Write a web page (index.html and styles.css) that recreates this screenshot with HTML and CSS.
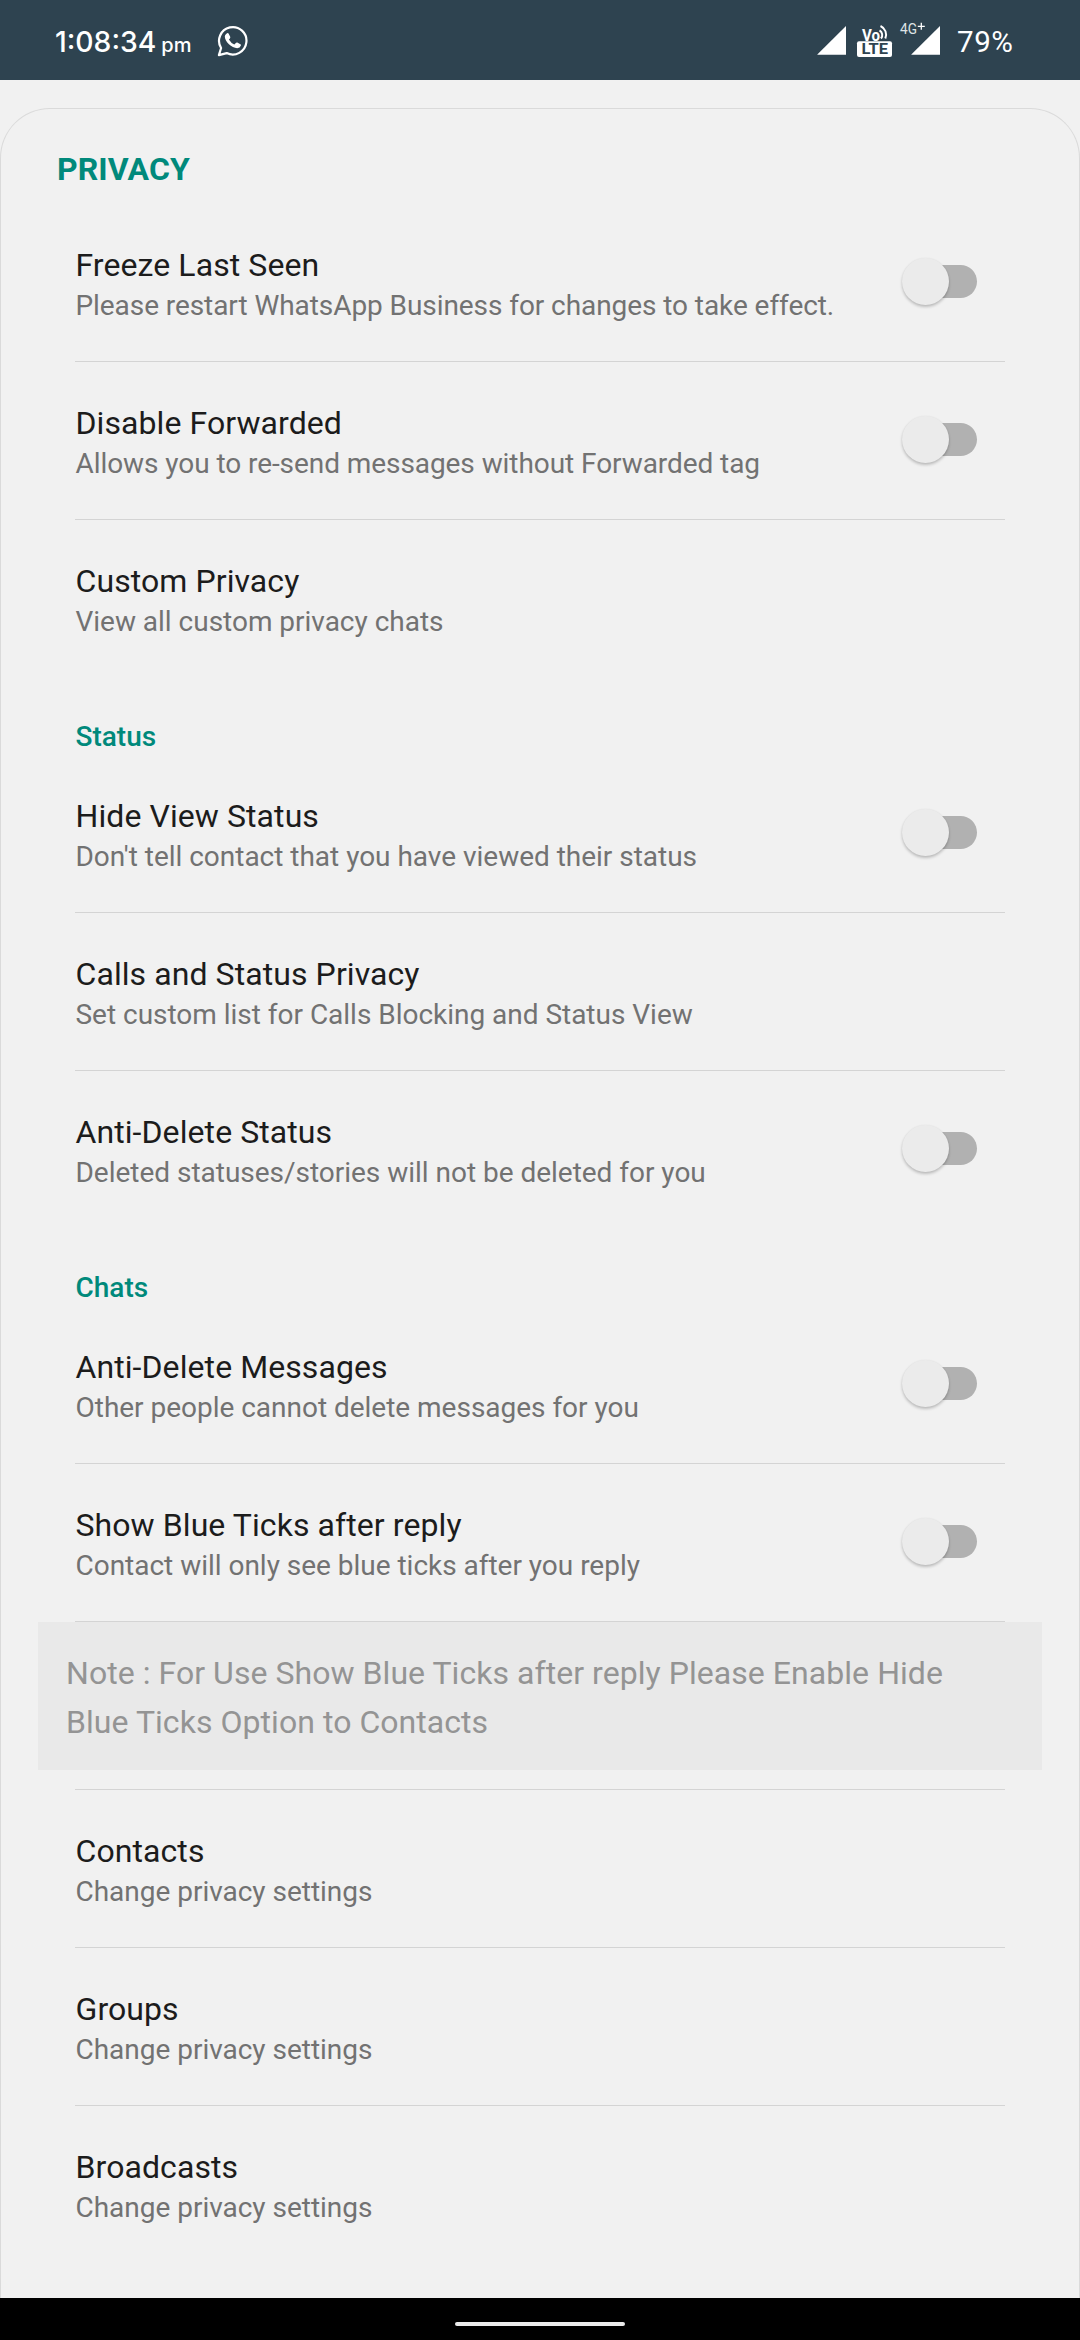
FILE: index.html
```html
<!DOCTYPE html>
<html lang="en">
<head>
<meta charset="utf-8">
<title>Privacy</title>
<link rel="stylesheet" href="styles.css">
</head>
<body>
<header class="status-bar">
  <div class="clock"><span class="clock-time">1:08:34</span><span class="clock-period">pm</span></div>
  <svg class="chat-icon" viewBox="0 0 32 32" aria-hidden="true">
    <path d="M1.9 30.1 4.1 23A13.7 13.7 0 1 1 9.7 28.1Z" fill="none" stroke="currentColor" stroke-width="2.2" stroke-linejoin="round"/>
    <path d="M9.4 8.7q1.5-1.3 2.3 0l1.5 3q.4.9-.3 1.7l-1 1.2q2 3.5 5.4 5l1.6-1.7q.6-.7 1.4-.3l3.1 1.6q.8.5.5 1.4-.8 2.5-3.7 2.7c-5.5-.5-12.3-6.5-12.4-11.8q.1-1.8 1.6-2.8Z" fill="currentColor"/>
  </svg>
  <svg class="signal-icons" viewBox="0 0 130 40" aria-hidden="true">
    <path d="M3.3 34.8V34.5L32 6V34.8Z" fill="currentColor"/>
    <text class="vo" x="48" y="20.5" textLength="18" lengthAdjust="spacingAndGlyphs">Vo</text>
    <path d="M65.5 10.3a5.5 5.5 0 0 1 1.5 8.2M66.5 6a9.5 9.5 0 0 1 4.800 12.5" fill="none" stroke="currentColor" stroke-width="2"/>
    <rect x="43" y="21.3" width="35" height="15.7" rx="2" fill="currentColor"/>
    <text class="lte" x="47.5" y="34.3" textLength="26.5" lengthAdjust="spacingAndGlyphs">LTE</text>
    <text class="gen" x="86" y="14.2" textLength="17" lengthAdjust="spacingAndGlyphs">4G</text>
    <path d="M103.8 6.3h7M107.3 2.8v7" stroke="currentColor" stroke-width="1.3"/>
    <path d="M97.3 34.8V34.5L126 6V34.8Z" fill="currentColor"/>
  </svg>
  <span class="battery">79%</span>
</header>

<main class="sheet">
  <h1 class="sheet-title">PRIVACY</h1>

  <section class="group">
    <div class="row">
      <div class="row-text"><div class="row-title">Freeze Last Seen</div><div class="row-summary tight">Please restart WhatsApp Business for changes to take effect.</div></div>
      <span class="toggle"></span>
    </div>
    <div class="row">
      <div class="row-text"><div class="row-title">Disable Forwarded</div><div class="row-summary tight">Allows you to re-send messages without Forwarded tag</div></div>
      <span class="toggle"></span>
    </div>
    <div class="row last">
      <div class="row-text"><div class="row-title">Custom Privacy</div><div class="row-summary">View all custom privacy chats</div></div>
    </div>
  </section>

  <section class="group">
    <h2 class="group-title">Status</h2>
    <div class="row">
      <div class="row-text"><div class="row-title">Hide View Status</div><div class="row-summary">Don't tell contact that you have viewed their status</div></div>
      <span class="toggle"></span>
    </div>
    <div class="row">
      <div class="row-text"><div class="row-title">Calls and Status Privacy</div><div class="row-summary">Set custom list for Calls Blocking and Status View</div></div>
    </div>
    <div class="row last">
      <div class="row-text"><div class="row-title">Anti-Delete Status</div><div class="row-summary">Deleted statuses/stories will not be deleted for you</div></div>
      <span class="toggle"></span>
    </div>
  </section>

  <section class="group">
    <h2 class="group-title">Chats</h2>
    <div class="row">
      <div class="row-text"><div class="row-title">Anti-Delete Messages</div><div class="row-summary">Other people cannot delete messages for you</div></div>
      <span class="toggle"></span>
    </div>
    <div class="row">
      <div class="row-text"><div class="row-title">Show Blue Ticks after reply</div><div class="row-summary">Contact will only see blue ticks after you reply</div></div>
      <span class="toggle"></span>
    </div>
  </section>

  <p class="note">Note : For Use Show Blue Ticks after reply Please Enable Hide<br>Blue Ticks Option to Contacts</p>

  <section class="group links">
    <div class="row">
      <div class="row-text"><div class="row-title">Contacts</div><div class="row-summary">Change privacy settings</div></div>
    </div>
    <div class="row">
      <div class="row-text"><div class="row-title">Groups</div><div class="row-summary">Change privacy settings</div></div>
    </div>
    <div class="row last">
      <div class="row-text"><div class="row-title">Broadcasts</div><div class="row-summary">Change privacy settings</div></div>
    </div>
  </section>
</main>

<footer class="nav-bar"><span class="nav-pill"></span></footer>
</body>
</html>
```
FILE: styles.css
```css
body {
  display: flex;
  flex-direction: column;
  width: 1080px;
  height: 2340px;
  margin: 0;
  overflow: hidden;
  background: #f1f1f1;
  font-family: Roboto, sans-serif;
}

/* Status bar */
.status-bar {
  display: flex;
  flex: none;
  align-items: flex-start;
  box-sizing: border-box;
  height: 80px;
  padding: 0 66px 0 55px;
  color: #fff;
  background: #2e4350;
}
.clock {
  display: flex;
  align-items: baseline;
  gap: 5px;
  padding-top: 25px;
  font-family: Inter, sans-serif;
  font-weight: 500;
  line-height: 34px;
}
.clock-time { font-size: 28.3px; }
.clock-period { font-size: 20px; }
.chat-icon { width: 32px; height: 32px; margin: 25px 0 0 26px; }
.signal-icons { width: 130px; height: 40px; margin: 20px 13px 0 auto; }
.vo { font: 700 17px Roboto, sans-serif; fill: #fff; }
.lte { font: 700 14.5px Roboto, sans-serif; fill: #2e4350; }
.gen { font: 400 14.5px Roboto, sans-serif; fill: #dfe3e5; }
.battery {
  width: 57px;
  padding-top: 25px;
  font-size: 29.5px;
  font-weight: 450;
  letter-spacing: .6px;
  line-height: 34px;
}

/* Settings sheet */
.sheet {
  flex: 1;
  margin-top: 28px;
  border: 1px solid #dadada;
  border-bottom: 0;
  border-radius: 50px 50px 0 0;
}
.sheet-title {
  margin: 0;
  padding: 41px 56px 16px;
  color: #00897b;
  font-size: 32px;
  font-weight: 700;
  letter-spacing: .1px;
  line-height: 38px;
}
.group { padding: 0 74px; }
.group-title {
  box-sizing: border-box;
  height: 78px;
  margin: 0;
  padding: 43px 0 0 .5px;
  color: #00897b;
  font-size: 28px;
  font-weight: 500;
  line-height: 34px;
}
.row {
  display: flex;
  justify-content: space-between;
  box-sizing: border-box;
  height: 158px;
  padding-right: 28px;
  border-bottom: 1px solid #d4d4d4;
}
.row.last { height: 157px; border-bottom: 0; }
.row-text { padding: 42px 0 0 .5px; white-space: nowrap; }
.row-title {
  color: #1c1c1c;
  font-size: 32px;
  letter-spacing: .08px;
  line-height: 38px;
}
.row-summary {
  margin-top: 5px;
  color: #727272;
  font-size: 28px;
  letter-spacing: -.02px;
  line-height: 34px;
}
.row-summary.tight { letter-spacing: -.07px; }

/* Switch in its off position: the thumb lies over the track */
.toggle {
  position: relative;
  flex: none;
  width: 75px;
  height: 47px;
  margin-top: 54px;
}
.toggle::before {
  content: "";
  position: absolute;
  top: 7px;
  right: 0;
  width: 66px;
  height: 33px;
  border-radius: 17px;
  background: #b1b1b1;
}
.toggle::after {
  content: "";
  position: absolute;
  top: 0;
  left: 0;
  width: 47px;
  height: 47px;
  border-radius: 50%;
  background: #ebebeb;
  box-shadow: 0 2px 3px rgba(0, 0, 0, .22), 0 0 2px rgba(0, 0, 0, .05);
}

.note {
  box-sizing: border-box;
  height: 148px;
  margin: 0 37px 19px;
  padding: 27px 28px 0;
  color: #949494;
  background: #e9e9e9;
  font-size: 32px;
  letter-spacing: .05px;
  line-height: 49px;
  white-space: nowrap;
}
.links .row:first-child { height: 159px; border-top: 1px solid #d4d4d4; }

/* Gesture bar */
.nav-bar {
  display: flex;
  flex: none;
  align-items: flex-start;
  justify-content: center;
  box-sizing: border-box;
  height: 42px;
  padding-top: 24px;
  background: #000;
}
.nav-pill { width: 170px; height: 4px; border-radius: 2px; background: #ebebeb; }
```
